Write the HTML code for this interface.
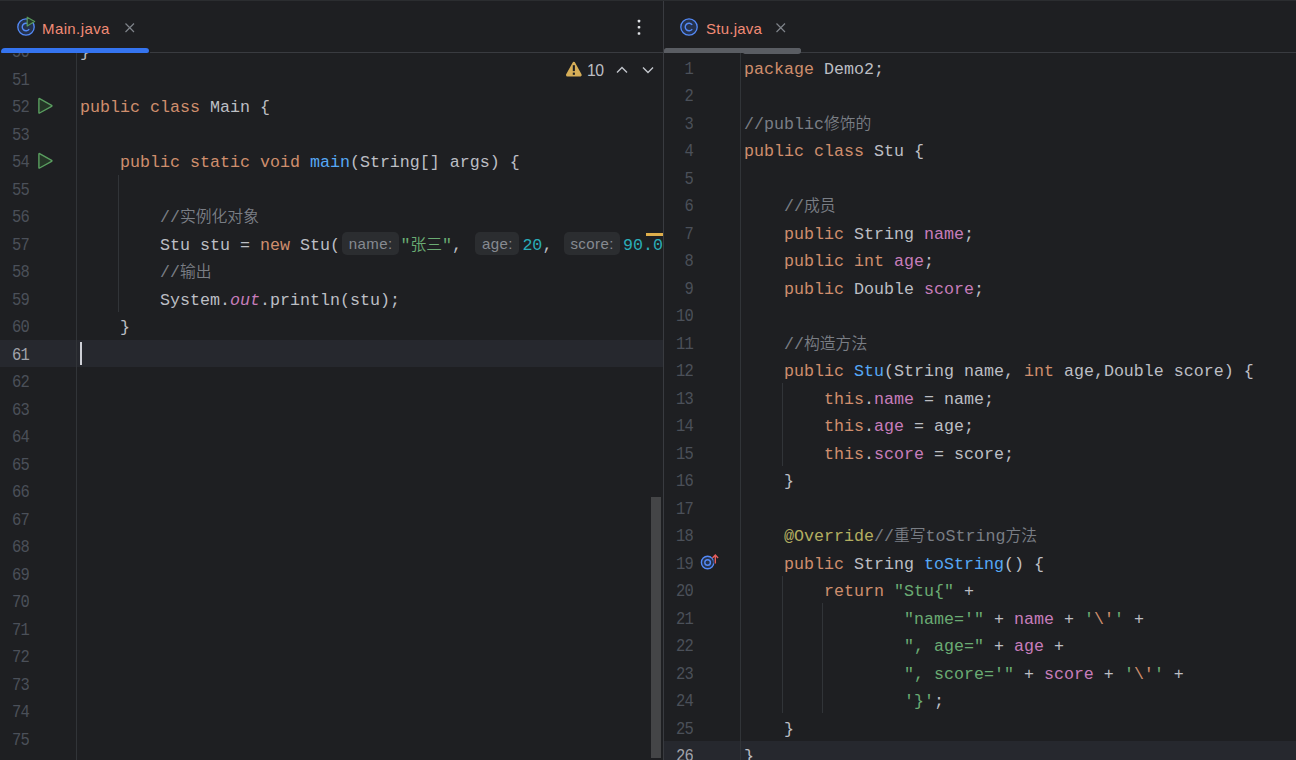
<!DOCTYPE html>
<html lang="zh">
<head>
<meta charset="utf-8">
<title>Main.java / Stu.java</title>
<style>
*{box-sizing:border-box;margin:0;padding:0}
html,body{width:1296px;height:760px;overflow:hidden;background:#1e1f22}
body{position:relative;font-family:"Liberation Mono","Noto Sans CJK SC",monospace;font-size:16.67px;color:#bcbec4}
.pane{position:absolute;top:0;height:760px;overflow:hidden;background:#1e1f22}
#left{left:0;width:663px}
#right{left:664px;width:632px}
#split{position:absolute;left:663px;top:0;width:1px;height:760px;background:#393b40}
.topline{position:absolute;left:0;top:0;width:1296px;height:1px;background:#2b2d30}
.tabbar{position:absolute;left:0;top:0;right:0;height:53px}
.tabsep{position:absolute;left:0;right:0;top:52px;height:1px;background:#393b40}
.tabtxt{position:absolute;top:19px;font-family:"Liberation Sans","Noto Sans CJK SC",sans-serif;font-size:15px;letter-spacing:0.4px;line-height:20px;color:#f28b76;white-space:pre}
.ed{position:absolute;left:0;right:0;top:53px;bottom:0;overflow:hidden}
.gsep{position:absolute;top:0;bottom:0;width:1px;background:#313438}
.row{position:absolute;left:0;right:0;height:27.5px;line-height:27.5px;white-space:pre}
.ln{position:absolute;left:0;text-align:right;color:#4b5059;letter-spacing:-0.9px;transform:scale(0.93,1.14);transform-origin:100% 74%}
.cur .ln{color:#a1a3ab}
.cd{position:absolute;top:0}
.cur{background:#26282e;height:27px}
.k{color:#cf8e6d}.m{color:#56a8f5}.s{color:#6aab73}.n{color:#2aacb8}.f{color:#c77dbb}.c{color:#7a7e85}.a{color:#b3ae60}
.i{font-style:italic}
.z{font-size:15.8px;font-weight:350}
.h{display:inline-block;vertical-align:top;margin-top:0.35px;height:23px;line-height:23px;border-radius:5px;background:#2b2d30;color:#868a91;font-family:"Liberation Sans","Noto Sans CJK SC",sans-serif;font-size:15px;letter-spacing:0.42px;padding:0 0 0 0.4px;text-align:center}
.guide{position:absolute;width:1px;background:#313438}
</style>
</head>
<body>
<div class="pane" id="left">
  <div class="tabbar">
    <svg style="position:absolute;left:14px;top:13.8px" width="24" height="26" viewBox="0 0 24 26">
      <circle cx="12" cy="13" r="8.2" fill="#25324d" stroke="#548af7" stroke-width="1.3"/>
      <path d="M15.2 10.9 A3.8 3.8 0 1 0 15.2 15.1" fill="none" stroke="#548af7" stroke-width="1.4"/>
      <path d="M13.2 3.2 L20.6 7.6 L13.2 12 Z" fill="#253627" stroke="#57965c" stroke-width="1.2" stroke-linejoin="round"/>
    </svg>
    <div class="tabtxt" style="left:42px">Main.java</div>
    <svg style="position:absolute;left:122.6px;top:20.7px" width="14" height="14" viewBox="0 0 14 14"><path d="M2.5 2.5 L11 11 M11 2.5 L2.5 11" stroke="#7f838a" stroke-width="1.2" fill="none"/></svg>
    <div style="position:absolute;left:0.5px;top:48px;width:148.5px;height:5px;background:#3574f0;border-radius:4px 3px 2px 1px"></div>
    <svg style="position:absolute;left:635px;top:18px" width="8" height="18" viewBox="0 0 8 18"><rect x="2.7" y="1.8" width="2.6" height="2.6" rx="0.8" fill="#dfe1e5"/><rect x="2.7" y="8" width="2.6" height="2.6" rx="0.8" fill="#dfe1e5"/><rect x="2.7" y="14.2" width="2.6" height="2.6" rx="0.8" fill="#dfe1e5"/></svg>
    <div class="tabsep" style="left:150px"></div>
  </div>
  <div class="ed" id="led">
<div class="row" style="top:-15.25px"><span class="ln" style="top:1.40px;width:29px">50</span><span class="cd" style="top:1.40px;left:80px">}</span></div>
<div class="row" style="top:12.25px"><span class="ln" style="top:1.40px;width:29px">51</span><span class="cd" style="top:1.40px;left:80px"></span></div>
<div class="row" style="top:39.75px"><span class="ln" style="top:1.40px;width:29px">52</span><span class="cd" style="top:1.40px;left:80px"><span class="k">public class</span> Main {</span><svg style="position:absolute;left:36px;top:2.75px" width="20" height="22" viewBox="0 0 20 22"><path d="M3.6 2.6 Q2.9 2.2 2.9 3 L2.9 16.6 Q2.9 17.4 3.6 17 L15.6 10.4 Q16.3 9.8 15.6 9.3 Z" fill="#253627" stroke="#5a9e60" stroke-width="1.4" stroke-linejoin="round"/></svg></div>
<div class="row" style="top:67.25px"><span class="ln" style="top:1.40px;width:29px">53</span><span class="cd" style="top:1.40px;left:80px"></span></div>
<div class="row" style="top:94.75px"><span class="ln" style="top:1.40px;width:29px">54</span><span class="cd" style="top:1.40px;left:80px">    <span class="k">public static void</span> <span class="m">main</span>(String[] args) {</span><svg style="position:absolute;left:36px;top:2.75px" width="20" height="22" viewBox="0 0 20 22"><path d="M3.6 2.6 Q2.9 2.2 2.9 3 L2.9 16.6 Q2.9 17.4 3.6 17 L15.6 10.4 Q16.3 9.8 15.6 9.3 Z" fill="#253627" stroke="#5a9e60" stroke-width="1.4" stroke-linejoin="round"/></svg></div>
<div class="row" style="top:122.25px"><span class="ln" style="top:1.40px;width:29px">55</span><span class="cd" style="top:1.40px;left:80px"></span></div>
<div class="row" style="top:149.75px"><span class="ln" style="top:1.40px;width:29px">56</span><span class="cd" style="top:1.40px;left:80px">        <span class="c">//<span class="z">实例化对象</span></span></span></div>
<div class="row" style="top:177.25px"><span class="ln" style="top:1.40px;width:29px">57</span><span class="cd" style="top:1.40px;left:80px">        Stu stu = <span class="k">new</span> Stu(<span class="h" style="margin-left:2.2px;width:56.6px;margin-right:1.8px">name:</span><span class="s">"<span class="z">张三</span>"</span>, <span class="h" style="margin-left:2.9px;width:44.4px;margin-right:3px">age:</span><span class="n">20</span>, <span class="h" style="margin-left:1.6px;width:55.8px;margin-right:3.3px">score:</span><span class="n">90.0</span></span></div>
<div class="row" style="top:204.75px"><span class="ln" style="top:1.40px;width:29px">58</span><span class="cd" style="top:1.40px;left:80px">        <span class="c">//<span class="z">输出</span></span></span></div>
<div class="row" style="top:232.25px"><span class="ln" style="top:1.40px;width:29px">59</span><span class="cd" style="top:1.40px;left:80px">        System.<span class="f i">out</span>.println(stu);</span></div>
<div class="row" style="top:259.75px"><span class="ln" style="top:1.40px;width:29px">60</span><span class="cd" style="top:1.40px;left:80px">    }</span></div>
<div class="row cur" style="top:287.00px"><span class="ln" style="top:1.65px;width:29px">61</span><span class="cd" style="top:1.65px;left:80px"></span><span style="position:absolute;left:80px;top:2px;width:2px;height:23px;background:#ced0d6"></span></div>
<div class="row" style="top:314.75px"><span class="ln" style="top:1.40px;width:29px">62</span><span class="cd" style="top:1.40px;left:80px"></span></div>
<div class="row" style="top:342.25px"><span class="ln" style="top:1.40px;width:29px">63</span><span class="cd" style="top:1.40px;left:80px"></span></div>
<div class="row" style="top:369.75px"><span class="ln" style="top:1.40px;width:29px">64</span><span class="cd" style="top:1.40px;left:80px"></span></div>
<div class="row" style="top:397.25px"><span class="ln" style="top:1.40px;width:29px">65</span><span class="cd" style="top:1.40px;left:80px"></span></div>
<div class="row" style="top:424.75px"><span class="ln" style="top:1.40px;width:29px">66</span><span class="cd" style="top:1.40px;left:80px"></span></div>
<div class="row" style="top:452.25px"><span class="ln" style="top:1.40px;width:29px">67</span><span class="cd" style="top:1.40px;left:80px"></span></div>
<div class="row" style="top:479.75px"><span class="ln" style="top:1.40px;width:29px">68</span><span class="cd" style="top:1.40px;left:80px"></span></div>
<div class="row" style="top:507.25px"><span class="ln" style="top:1.40px;width:29px">69</span><span class="cd" style="top:1.40px;left:80px"></span></div>
<div class="row" style="top:534.75px"><span class="ln" style="top:1.40px;width:29px">70</span><span class="cd" style="top:1.40px;left:80px"></span></div>
<div class="row" style="top:562.25px"><span class="ln" style="top:1.40px;width:29px">71</span><span class="cd" style="top:1.40px;left:80px"></span></div>
<div class="row" style="top:589.75px"><span class="ln" style="top:1.40px;width:29px">72</span><span class="cd" style="top:1.40px;left:80px"></span></div>
<div class="row" style="top:617.25px"><span class="ln" style="top:1.40px;width:29px">73</span><span class="cd" style="top:1.40px;left:80px"></span></div>
<div class="row" style="top:644.75px"><span class="ln" style="top:1.40px;width:29px">74</span><span class="cd" style="top:1.40px;left:80px"></span></div>
<div class="row" style="top:672.25px"><span class="ln" style="top:1.40px;width:29px">75</span><span class="cd" style="top:1.40px;left:80px"></span></div>
<div class="row" style="top:699.75px"><span class="ln" style="top:1.40px;width:29px">76</span><span class="cd" style="top:1.40px;left:80px"></span></div>
<div class="gsep" style="left:76px"></div>
<div class="guide" style="left:118px;top:122px;height:137px"></div>
<div style="position:absolute;left:651px;top:444px;width:10px;height:261px;background:#444547"></div>
<div style="position:absolute;left:646px;top:180px;width:17px;height:3px;background:#dfae4b"></div>
<div style="position:absolute;left:565px;top:6px;width:95px;height:22px">
<svg style="position:absolute;left:0;top:0" width="18" height="22" viewBox="0 0 18 22"><path d="M8.85 4.4 L15.2 16 H2.5 Z" fill="#d6ae58" stroke="#d6ae58" stroke-width="3" stroke-linejoin="round"/><rect x="7.8" y="6.2" width="2.1" height="5.9" fill="#1e1f22"/><rect x="7.8" y="13.6" width="2.1" height="2.2" fill="#1e1f22"/></svg>
<span style="position:absolute;left:22px;top:1.3px;line-height:22px;font-family:'Liberation Sans',sans-serif;font-size:15.8px;letter-spacing:-0.6px;color:#bcbec4">10</span>
<svg style="position:absolute;left:50px;top:5px" width="14" height="12" viewBox="0 0 14 12"><path d="M2 8.5 L7 3.5 L12 8.5" fill="none" stroke="#c3c6cc" stroke-width="1.4"/></svg>
<svg style="position:absolute;left:76px;top:5px" width="14" height="12" viewBox="0 0 14 12"><path d="M2 3.5 L7 8.5 L12 3.5" fill="none" stroke="#c3c6cc" stroke-width="1.4"/></svg>
</div>
  </div>
</div>
<div id="split"></div>
<div class="pane" id="right">
  <div class="tabbar">
    <svg style="position:absolute;left:15px;top:17px" width="20" height="20" viewBox="0 0 20 20">
      <circle cx="10" cy="10" r="8.2" fill="#25324d" stroke="#548af7" stroke-width="1.3"/>
      <path d="M13.2 7.9 A3.8 3.8 0 1 0 13.2 12.1" fill="none" stroke="#548af7" stroke-width="1.4"/>
    </svg>
    <div class="tabtxt" style="left:42px;letter-spacing:0.24px">Stu.java</div>
    <svg style="position:absolute;left:110.3px;top:20.7px" width="14" height="14" viewBox="0 0 14 14"><path d="M2.5 2.5 L11 11 M11 2.5 L2.5 11" stroke="#7f838a" stroke-width="1.2" fill="none"/></svg>
    <div class="tabsep"></div>
    <div style="position:absolute;left:0;top:48px;width:136.7px;height:5px;background:#5a5d63;border-radius:3px 3px 3px 0"></div>
  </div>
  <div class="ed" id="red">
<div class="row" style="top:1.25px"><span class="ln" style="top:1.40px;width:29px">1</span><span class="cd" style="top:1.40px;left:80px"><span class="k">package</span> Demo2;</span></div>
<div class="row" style="top:28.75px"><span class="ln" style="top:1.40px;width:29px">2</span><span class="cd" style="top:1.40px;left:80px"></span></div>
<div class="row" style="top:56.25px"><span class="ln" style="top:1.40px;width:29px">3</span><span class="cd" style="top:1.40px;left:80px"><span class="c">//public<span class="z">修饰的</span></span></span></div>
<div class="row" style="top:83.75px"><span class="ln" style="top:1.40px;width:29px">4</span><span class="cd" style="top:1.40px;left:80px"><span class="k">public class</span> Stu {</span></div>
<div class="row" style="top:111.25px"><span class="ln" style="top:1.40px;width:29px">5</span><span class="cd" style="top:1.40px;left:80px"></span></div>
<div class="row" style="top:138.75px"><span class="ln" style="top:1.40px;width:29px">6</span><span class="cd" style="top:1.40px;left:80px">    <span class="c">//<span class="z">成员</span></span></span></div>
<div class="row" style="top:166.25px"><span class="ln" style="top:1.40px;width:29px">7</span><span class="cd" style="top:1.40px;left:80px">    <span class="k">public</span> String <span class="f">name</span>;</span></div>
<div class="row" style="top:193.75px"><span class="ln" style="top:1.40px;width:29px">8</span><span class="cd" style="top:1.40px;left:80px">    <span class="k">public int</span> <span class="f">age</span>;</span></div>
<div class="row" style="top:221.25px"><span class="ln" style="top:1.40px;width:29px">9</span><span class="cd" style="top:1.40px;left:80px">    <span class="k">public</span> Double <span class="f">score</span>;</span></div>
<div class="row" style="top:248.75px"><span class="ln" style="top:1.40px;width:29px">10</span><span class="cd" style="top:1.40px;left:80px"></span></div>
<div class="row" style="top:276.25px"><span class="ln" style="top:1.40px;width:29px">11</span><span class="cd" style="top:1.40px;left:80px">    <span class="c">//<span class="z">构造方法</span></span></span></div>
<div class="row" style="top:303.75px"><span class="ln" style="top:1.40px;width:29px">12</span><span class="cd" style="top:1.40px;left:80px">    <span class="k">public</span> <span class="m">Stu</span>(String name, <span class="k">int</span> age,Double score) {</span></div>
<div class="row" style="top:331.25px"><span class="ln" style="top:1.40px;width:29px">13</span><span class="cd" style="top:1.40px;left:80px">        <span class="k">this</span>.<span class="f">name</span> = name;</span></div>
<div class="row" style="top:358.75px"><span class="ln" style="top:1.40px;width:29px">14</span><span class="cd" style="top:1.40px;left:80px">        <span class="k">this</span>.<span class="f">age</span> = age;</span></div>
<div class="row" style="top:386.25px"><span class="ln" style="top:1.40px;width:29px">15</span><span class="cd" style="top:1.40px;left:80px">        <span class="k">this</span>.<span class="f">score</span> = score;</span></div>
<div class="row" style="top:413.75px"><span class="ln" style="top:1.40px;width:29px">16</span><span class="cd" style="top:1.40px;left:80px">    }</span></div>
<div class="row" style="top:441.25px"><span class="ln" style="top:1.40px;width:29px">17</span><span class="cd" style="top:1.40px;left:80px"></span></div>
<div class="row" style="top:468.75px"><span class="ln" style="top:1.40px;width:29px">18</span><span class="cd" style="top:1.40px;left:80px">    <span class="a">@Override</span><span class="c">//<span class="z">重写</span>toString<span class="z">方法</span></span></span></div>
<div class="row" style="top:496.25px"><span class="ln" style="top:1.40px;width:29px">19</span><span class="cd" style="top:1.40px;left:80px">    <span class="k">public</span> String <span class="m">toString</span>() {</span><svg style="position:absolute;left:35px;top:3px" width="24" height="22" viewBox="0 0 24 22"><circle cx="8.6" cy="10.5" r="6.2" fill="#25324d" stroke="#548af7" stroke-width="1.4"/><circle cx="8.6" cy="10.5" r="2.8" fill="none" stroke="#548af7" stroke-width="1.4"/><path d="M16.3 11.6 V3.4 M13.5 5.9 L16.3 3 L19.1 5.9" fill="none" stroke="#1e1f22" stroke-width="3.6"/><path d="M16.3 11.6 V3.4 M13.5 5.9 L16.3 3 L19.1 5.9" fill="none" stroke="#e35d5d" stroke-width="1.4"/></svg></div>
<div class="row" style="top:523.75px"><span class="ln" style="top:1.40px;width:29px">20</span><span class="cd" style="top:1.40px;left:80px">        <span class="k">return</span> <span class="s">"Stu{"</span> +</span></div>
<div class="row" style="top:551.25px"><span class="ln" style="top:1.40px;width:29px">21</span><span class="cd" style="top:1.40px;left:80px">                <span class="s">"name='"</span> + <span class="f">name</span> + <span class="s">'<span class="k">\'</span>'</span> +</span></div>
<div class="row" style="top:578.75px"><span class="ln" style="top:1.40px;width:29px">22</span><span class="cd" style="top:1.40px;left:80px">                <span class="s">", age="</span> + <span class="f">age</span> +</span></div>
<div class="row" style="top:606.25px"><span class="ln" style="top:1.40px;width:29px">23</span><span class="cd" style="top:1.40px;left:80px">                <span class="s">", score='"</span> + <span class="f">score</span> + <span class="s">'<span class="k">\'</span>'</span> +</span></div>
<div class="row" style="top:633.75px"><span class="ln" style="top:1.40px;width:29px">24</span><span class="cd" style="top:1.40px;left:80px">                <span class="s">'}'</span>;</span></div>
<div class="row" style="top:661.25px"><span class="ln" style="top:1.40px;width:29px">25</span><span class="cd" style="top:1.40px;left:80px">    }</span></div>
<div class="row cur" style="top:688.00px"><span class="ln" style="top:2.15px;width:29px">26</span><span class="cd" style="top:2.15px;left:80px">}</span></div>
<div class="gsep" style="left:76px"></div>
<div class="guide" style="left:118px;top:330px;height:83px"></div>
<div class="guide" style="left:118px;top:523px;height:137px"></div>
<div class="guide" style="left:158px;top:550px;height:110px"></div>
  </div>
  <div style="position:absolute;left:79.4px;top:48px;width:57.3px;height:6px;background:#5a5d63;border-radius:0 3px 3px 2px"></div>
</div>
<div class="topline"></div>
</body>
</html>
